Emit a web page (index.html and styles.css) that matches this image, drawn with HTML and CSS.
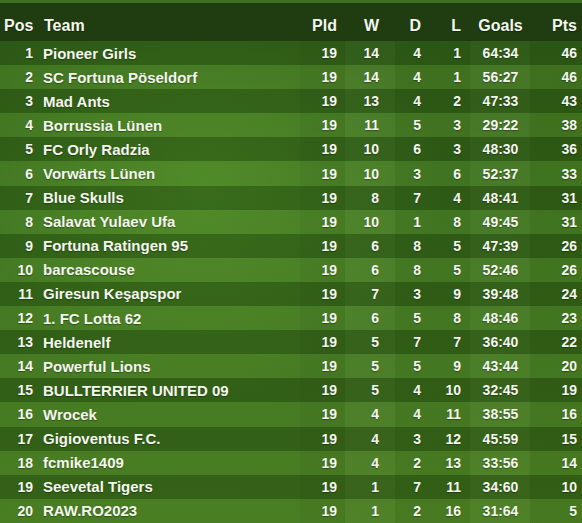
FILE: index.html
```html
<!DOCTYPE html>
<html>
<head>
<meta charset="utf-8">
<link rel="stylesheet" href="styles.css">
</head>
<body>
<div class="table">
  <div class="topband"></div>
  <div class="row head">
    <div class="c pos">Pos</div><div class="c team">Team</div><div class="c num">Pld</div><div class="c num">W</div><div class="c num">D</div><div class="c num">L</div><div class="c goals">Goals</div><div class="c num">Pts</div>
  </div>
  <div class="row"><div class="c pos">1</div><div class="c team">Pioneer Girls</div><div class="c num">19</div><div class="c num">14</div><div class="c num">4</div><div class="c num">1</div><div class="c goals">64:34</div><div class="c num">46</div></div>
  <div class="row"><div class="c pos">2</div><div class="c team">SC Fortuna Pöseldorf</div><div class="c num">19</div><div class="c num">14</div><div class="c num">4</div><div class="c num">1</div><div class="c goals">56:27</div><div class="c num">46</div></div>
  <div class="row"><div class="c pos">3</div><div class="c team">Mad Ants</div><div class="c num">19</div><div class="c num">13</div><div class="c num">4</div><div class="c num">2</div><div class="c goals">47:33</div><div class="c num">43</div></div>
  <div class="row"><div class="c pos">4</div><div class="c team">Borrussia Lünen</div><div class="c num">19</div><div class="c num">11</div><div class="c num">5</div><div class="c num">3</div><div class="c goals">29:22</div><div class="c num">38</div></div>
  <div class="row"><div class="c pos">5</div><div class="c team">FC Orly Radzia</div><div class="c num">19</div><div class="c num">10</div><div class="c num">6</div><div class="c num">3</div><div class="c goals">48:30</div><div class="c num">36</div></div>
  <div class="row"><div class="c pos">6</div><div class="c team">Vorwärts Lünen</div><div class="c num">19</div><div class="c num">10</div><div class="c num">3</div><div class="c num">6</div><div class="c goals">52:37</div><div class="c num">33</div></div>
  <div class="row"><div class="c pos">7</div><div class="c team">Blue Skulls</div><div class="c num">19</div><div class="c num">8</div><div class="c num">7</div><div class="c num">4</div><div class="c goals">48:41</div><div class="c num">31</div></div>
  <div class="row"><div class="c pos">8</div><div class="c team">Salavat Yulaev Ufa</div><div class="c num">19</div><div class="c num">10</div><div class="c num">1</div><div class="c num">8</div><div class="c goals">49:45</div><div class="c num">31</div></div>
  <div class="row"><div class="c pos">9</div><div class="c team">Fortuna Ratingen 95</div><div class="c num">19</div><div class="c num">6</div><div class="c num">8</div><div class="c num">5</div><div class="c goals">47:39</div><div class="c num">26</div></div>
  <div class="row"><div class="c pos">10</div><div class="c team">barcascouse</div><div class="c num">19</div><div class="c num">6</div><div class="c num">8</div><div class="c num">5</div><div class="c goals">52:46</div><div class="c num">26</div></div>
  <div class="row"><div class="c pos">11</div><div class="c team">Giresun Keşapspor</div><div class="c num">19</div><div class="c num">7</div><div class="c num">3</div><div class="c num">9</div><div class="c goals">39:48</div><div class="c num">24</div></div>
  <div class="row"><div class="c pos">12</div><div class="c team">1. FC Lotta 62</div><div class="c num">19</div><div class="c num">6</div><div class="c num">5</div><div class="c num">8</div><div class="c goals">48:46</div><div class="c num">23</div></div>
  <div class="row"><div class="c pos">13</div><div class="c team">Heldenelf</div><div class="c num">19</div><div class="c num">5</div><div class="c num">7</div><div class="c num">7</div><div class="c goals">36:40</div><div class="c num">22</div></div>
  <div class="row"><div class="c pos">14</div><div class="c team">Powerful Lions</div><div class="c num">19</div><div class="c num">5</div><div class="c num">5</div><div class="c num">9</div><div class="c goals">43:44</div><div class="c num">20</div></div>
  <div class="row"><div class="c pos">15</div><div class="c team">BULLTERRIER UNITED 09</div><div class="c num">19</div><div class="c num">5</div><div class="c num">4</div><div class="c num">10</div><div class="c goals">32:45</div><div class="c num">19</div></div>
  <div class="row"><div class="c pos">16</div><div class="c team">Wrocek</div><div class="c num">19</div><div class="c num">4</div><div class="c num">4</div><div class="c num">11</div><div class="c goals">38:55</div><div class="c num">16</div></div>
  <div class="row"><div class="c pos">17</div><div class="c team">Gigioventus F.C.</div><div class="c num">19</div><div class="c num">4</div><div class="c num">3</div><div class="c num">12</div><div class="c goals">45:59</div><div class="c num">15</div></div>
  <div class="row"><div class="c pos">18</div><div class="c team">fcmike1409</div><div class="c num">19</div><div class="c num">4</div><div class="c num">2</div><div class="c num">13</div><div class="c goals">33:56</div><div class="c num">14</div></div>
  <div class="row"><div class="c pos">19</div><div class="c team">Seevetal Tigers</div><div class="c num">19</div><div class="c num">1</div><div class="c num">7</div><div class="c num">11</div><div class="c goals">34:60</div><div class="c num">10</div></div>
  <div class="row"><div class="c pos">20</div><div class="c team">RAW.RO2023</div><div class="c num">19</div><div class="c num">1</div><div class="c num">2</div><div class="c num">16</div><div class="c goals">31:64</div><div class="c num">5</div></div>
</div>
</body>
</html>
```
FILE: styles.css
```css
html, body {
  margin: 0;
  padding: 0;
  width: 582px;
  height: 523px;
  overflow: hidden;
}
body {
  background: #3a6a1c;
  font-family: "Liberation Sans", Arial, sans-serif;
  font-weight: bold;
  color: #f4f6ee;
}
.table {
  width: 582px;
  height: 523px;
  background:
    linear-gradient(90deg,
      rgba(0,0,0,0) 0px, rgba(0,0,0,0) 300px,
      rgba(0,0,0,0.04) 300px, rgba(0,0,0,0.04) 345px,
      rgba(255,255,255,0.03) 345px, rgba(255,255,255,0.03) 395px,
      rgba(0,0,0,0.03) 395px, rgba(0,0,0,0.03) 470px,
      rgba(255,255,255,0.03) 470px, rgba(255,255,255,0.03) 530px,
      rgba(0,0,0,0.04) 530px),
    linear-gradient(180deg, rgba(0,0,0,0.06) 0%, rgba(0,0,0,0) 40%, rgba(150,190,60,0.10) 100%),
    radial-gradient(ellipse at 35% 35%, #4f8a28 0%, #3f7420 45%, #3d721c 100%);
}
.topband {
  height: 3px;
  background: #3f6e24;
}
.row {
  display: grid;
  grid-template-columns: 43px 257px 37px 42px 42px 40px 79px 37px;
  padding-right: 5px;
  height: 24.1px;
  align-items: center;
  font-size: 14px;
  text-shadow: 0 1px 1px rgba(0,0,0,0.35);
}
.row:nth-child(odd) {
  background: rgba(10, 40, 0, 0.3);
}
.row:nth-child(even) {
  background: rgba(120, 170, 60, 0.08);
}
.row.head {
  height: 38px;
  font-size: 16px;
  background: #1f3d10;
  align-items: end;
  padding-bottom: 0;
  box-sizing: border-box;
}
.head .c {
  padding-bottom: 6px;
}
.c {
  white-space: nowrap;
  overflow: visible;
}
.pos {
  text-align: right;
  padding-right: 10px;
}
.head .pos {
  text-align: left;
  padding-left: 4px;
  padding-right: 0;
}
.team {
  font-size: 15px;
}
.head .team {
  font-size: 16px;
  padding-left: 1px;
}
.num {
  text-align: right;
}
.goals {
  text-align: center;
}
```
